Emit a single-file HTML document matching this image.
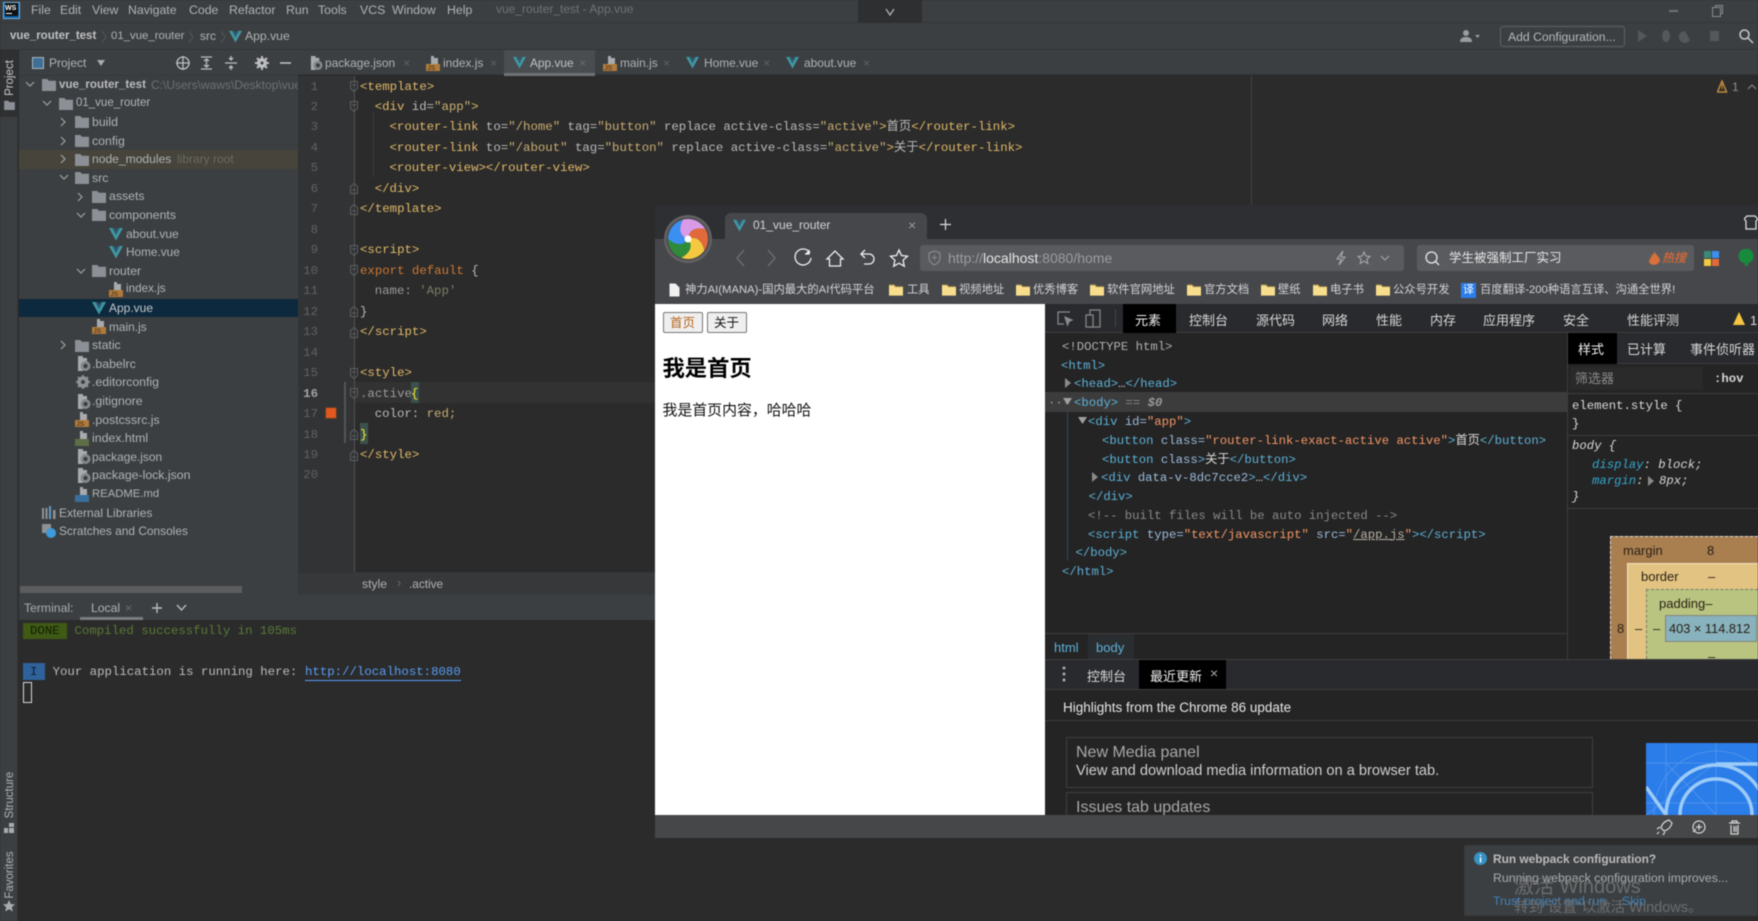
<!DOCTYPE html>
<html lang="zh"><head><meta charset="utf-8"><title>vue_router_test - App.vue</title>
<style>
*{box-sizing:border-box}
html,body{margin:0;padding:0;width:1758px;height:921px;overflow:hidden;background:#2b2b2b}
body{position:relative;font-family:"Liberation Sans","Noto Sans CJK SC",sans-serif;font-size:12.300px;color:#b0b3b5;filter:blur(.4px)}
.b,.t,svg.i{position:absolute}
.t{white-space:pre;line-height:20px;height:20px}
.m{font-family:"Liberation Mono","Noto Sans CJK SC",monospace;font-size:12.37px;margin-top:.5px}
.d{font-family:"Liberation Mono","Noto Sans CJK SC",monospace;font-size:12.28px;color:#5db0d7}
.c{font-family:"Liberation Sans","Noto Sans CJK SC",sans-serif;font-size:13px;color:#d8d8d8;margin-top:1.500px}
.bm{font-size:11.300px;color:#d4d4d6}
.tb{font-size:11.900px;top:53px}
.ln{font-family:"Liberation Mono",monospace;font-size:12.37px;color:#606366;width:24px;text-align:right;left:294px;margin-top:.5px}
.g{color:#e0b868}.a{color:#bababa}.v{color:#c8ad72}.o{color:#cc7832}.w{color:#bababa}.s{color:#7b7f67}.q{color:#9b9b9b}
.ka{color:#9bbbdc}.va{color:#f29766}.wh{color:#d9d9d9}.cm{color:#898989}
.lab{color:#2a2116;font-size:13px}
</style></head><body>
<svg width="0" height="0" style="position:absolute">
<defs>
<symbol id="vue" viewBox="0 0 14 14"><path d="M0 1h3.4L7 8 10.600 1H14L7 13.500z" fill="#3f97a5"/><path d="M3.600 1h2L7 4 8.400 1h2L7 7.600z" fill="#2f5f72"/></symbol>
<symbol id="fo" viewBox="0 0 14 13"><path d="M0 1h5.500l1.200 1.800H14V13H0z" fill="#8b9096"/></symbol>
<symbol id="js" viewBox="0 0 14 15"><path d="M5 0h3v2h4v7H5z" fill="#a7abae"/><rect y="8" width="14" height="7" fill="#b07a3c"/><text x="1.400" y="14.200" font-family="Liberation Sans" font-size="6.600" fill="#3a2a14">JS</text></symbol>
<symbol id="cf" viewBox="0 0 14 15"><path d="M1 0h5v2h4v5l-4 8H1z" fill="#a7abae"/><circle cx="8.500" cy="10" r="5" fill="#85898d"/><circle cx="8.500" cy="10" r="2.200" fill="#3c3f41"/></symbol>
<symbol id="ht" viewBox="0 0 14 15"><path d="M5 0h3v2h4v7H5z" fill="#a7abae"/><rect y="8" width="14" height="7" fill="#5e6e46"/></symbol>
<symbol id="md" viewBox="0 0 14 15"><path d="M5 0h3v2h4v7H5z" fill="#a7abae"/><rect y="8" width="14" height="7" fill="#3a6f9d"/></symbol>
<symbol id="fold" viewBox="0 0 8 11"><path d="M.5.5h7v7L4 10.500.5 7.500zM2 4h4" fill="none" stroke="#5c5f61"/></symbol>
<symbol id="fend" viewBox="0 0 8 11"><path d="M.5 10.500h7v-7L4 .5.5 3.500zM2 7h4" fill="none" stroke="#5c5f61"/></symbol>
<symbol id="fd" viewBox="0 0 16 14"><path d="M0 2h6l1.400 2H16v10H0z" fill="#f7dd8c"/><path d="M0 1.500h6l1.400 2H16" fill="none" stroke="#8c7a42"/></symbol>
</defs></svg>

<!-- title bar -->
<div class="b" style="left:0;top:0;width:1758px;height:23px;background:#3c3f41;border-bottom:1px solid #353739"></div>
<div class="b" style="left:3px;top:2px;width:17px;height:17px;background:#0b5fa5;border:1px solid #6fb0e0"></div>
<div class="b" style="left:5px;top:3px;width:13px;height:13px;background:#111"></div>
<span class="t" style="left:5px;top:-1px;font-size:7px;font-weight:bold;color:#fff">WS</span>
<div class="b" style="left:6px;top:13px;width:6px;height:1px;background:#fff"></div>
<span class="t" style="left:31px;top:0">File</span><span class="t" style="left:60px;top:0">Edit</span><span class="t" style="left:92px;top:0">View</span><span class="t" style="left:128px;top:0">Navigate</span><span class="t" style="left:189px;top:0">Code</span><span class="t" style="left:229px;top:0">Refactor</span><span class="t" style="left:286px;top:0">Run</span><span class="t" style="left:318px;top:0">Tools</span><span class="t" style="left:360px;top:0">VCS</span><span class="t" style="left:392px;top:0">Window</span><span class="t" style="left:447px;top:0">Help</span>
<span class="t" style="left:496px;top:-1px;font-size:12px;color:#6f7376">vue_router_test - App.vue</span>
<div class="b" style="left:858px;top:0;width:64px;height:23px;background:#2d2f31"></div>
<svg class="i" style="left:884px;top:7px" width="12" height="10"><path d="M2 2l4 6 4-6" fill="none" stroke="#b5b5b5" stroke-width="1.200"/></svg>
<div class="b" style="left:1669px;top:10px;width:9px;height:1.500px;background:#6f7275"></div>
<svg class="i" style="left:1712px;top:5px" width="11" height="12" fill="none" stroke="#8a8c8f"><path d="M3.500 2.500v-2h7v8h-2"/><rect x=".5" y="2.500" width="8" height="9"/></svg>

<!-- nav bar -->
<div class="b" style="left:0;top:23px;width:1758px;height:27px;background:#3c3f41;border-bottom:1px solid #323436"></div>
<span class="t" style="left:10px;top:26px;font-weight:bold;font-size:11.500px;color:#bfc1c3">vue_router_test</span>
<svg class="i" style="left:100px;top:29px" width="130" height="16" fill="none" stroke="#54575a"><path d="M2 2l4 6-4 6M89 2l4 6-4 6M121 2l4 6-4 6"/></svg>
<span class="t" style="left:111px;top:26px;font-size:11.400px">01_vue_router</span>
<span class="t" style="left:200px;top:26px;font-size:12px">src</span>
<svg class="i" style="left:229px;top:30px" width="13" height="13"><use href="#vue"/></svg>
<span class="t" style="left:245px;top:26px;font-size:12.200px">App.vue</span>
<svg class="i" style="left:1459px;top:28px" width="22" height="16"><circle cx="7" cy="5" r="3" fill="#9a9c9e"/><path d="M1 14c0-4 3-5 6-5s6 1 6 5z" fill="#9a9c9e"/><path d="M16 7h5l-2.500 3z" fill="#9a9c9e"/></svg>
<div class="b" style="left:1500px;top:26px;width:125px;height:21px;border:1px solid #5f6265;border-radius:3px"></div>
<span class="t" style="left:1508px;top:27px;font-size:12.200px;color:#b5b7b9">Add Configuration...</span>
<svg class="i" style="left:1636px;top:28px" width="90" height="16" fill="#55585a"><path d="M2 2l9 6-9 6z"/><ellipse cx="30" cy="8" rx="4" ry="6"/><path d="M49 3a6 6 0 1 0 5 9z"/><rect x="74" y="3" width="9" height="10"/></svg>
<svg class="i" style="left:1738px;top:28px" width="16" height="16" fill="none" stroke="#c6c8ca" stroke-width="1.500"><circle cx="6.500" cy="6.500" r="4.500"/><path d="M10 10l5 5"/></svg>

<!-- left strip -->
<div class="b" style="left:0;top:50px;width:18px;height:871px;background:#3c3f41;border-right:1px solid #323436"></div>
<div class="b" style="left:0;top:50px;width:18px;height:67px;background:#2e3032"></div>
<span class="t" style="left:-8px;top:68px;width:36px;font-size:11.500px;color:#c9cbcd;transform:rotate(-90deg);text-align:center">Project</span>
<svg class="i" style="left:4px;top:100px" width="11" height="10"><use href="#fo"/></svg>
<span class="t" style="left:-14px;top:785px;width:48px;font-size:11.500px;transform:rotate(-90deg);text-align:center">Structure</span>
<svg class="i" style="left:4px;top:823px" width="10" height="10" fill="#a9acaf"><rect x="0" y="5" width="4" height="5"/><rect x="5" y="0" width="5" height="4"/><rect x="5" y="5" width="5" height="5"/></svg>
<span class="t" style="left:-14px;top:865px;width:48px;font-size:11.500px;transform:rotate(-90deg);text-align:center">Favorites</span>
<svg class="i" style="left:3px;top:900px" width="12" height="12"><path d="M6 0l1.800 4 4.200.4-3.200 2.800 1 4.300L6 9.200 2.200 11.500l1-4.300L0 4.400 4.200 4z" fill="#a9acaf"/></svg>

<!-- project panel -->
<div class="b" style="left:19px;top:50px;width:279px;height:545px;background:#3c3f41"></div>
<div class="b" style="left:19px;top:75px;width:279px;height:1px;background:#36383a"></div>
<div class="b" style="left:32px;top:57px;width:12px;height:12px;background:#3f6f96;border:1px solid #a9b5bd"></div>
<span class="t" style="left:49px;top:53px;font-size:12px">Project</span>
<svg class="i" style="left:97px;top:60px" width="9" height="6"><path d="M0 0h8L4 6z" fill="#a9acaf"/></svg>
<svg class="i" style="left:175px;top:55px" width="120" height="16" fill="none" stroke="#bcbec0" stroke-width="1.300"><circle cx="8" cy="8" r="6"/><path d="M8 1v14M1 8h14"/><path d="M26 2h11M26 14h11M31.500 4v8M29 6l2.500-2 2.500 2M29 10l2.500 2 2.500-2"/><path d="M50 8h12M56 1v4M54 3l2 2 2-2M56 15v-4M54 13l2-2 2 2"/><circle cx="87" cy="8" r="3.500" stroke-width="3"/><path d="M87 1v14M80 8h14M82 3l10 10M92 3L82 13" stroke-width="2"/><circle cx="87" cy="8" r="1.500" fill="#3c3f41" stroke="none"/><path d="M105 8h11" stroke-width="1.600"/></svg>
<div class="b" style="left:19px;top:150px;width:279px;height:18.500px;background:#46443b"></div>
<div class="b" style="left:19px;top:298.500px;width:279px;height:18.500px;background:#0d293e"></div>

<!-- chevrons -->
<svg class="i" style="left:0;top:0" width="300" height="600" fill="none" stroke="#a0a3a6" stroke-width="1.200">
<path d="M26 82l4 4 4-4M43 101l4 4 4-4M60 175l4 4 4-4M77 213l4 4 4-4M77 269l4 4 4-4"/>
<path d="M61 118l4 4-4 4M61 137l4 4-4 4M61 155l4 4-4 4M78 193l4 4-4 4M61 341l4 4-4 4"/>
</svg>

<svg class="i" style="left:42px;top:78px" width="14" height="13"><use href="#fo"/></svg><span class="t" style="left:59px;top:74.700px;font-weight:bold;color:#b9bbbd;font-size:11.600px">vue_router_test</span><span class="t" style="left:151px;top:74.700px;width:147px;overflow:hidden;color:#6d7174;font-size:12px">C:\Users\waws\Desktop\vue_router_test</span>
<svg class="i" style="left:59px;top:97px" width="14" height="13"><use href="#fo"/></svg><span class="t" style="left:76px;top:93.300px;font-size:11.500px">01_vue_router</span>
<svg class="i" style="left:75px;top:115px" width="14" height="13"><use href="#fo"/></svg><span class="t" style="left:92px;top:111.900px">build</span>
<svg class="i" style="left:75px;top:134px" width="14" height="13"><use href="#fo"/></svg><span class="t" style="left:92px;top:130.500px">config</span>
<svg class="i" style="left:75px;top:153px" width="14" height="13"><use href="#fo"/></svg><span class="t" style="left:92px;top:149.100px;font-size:12.100px">node_modules</span><span class="t" style="left:177px;top:149.100px;color:#696b63;font-size:12px">library root</span>
<svg class="i" style="left:75px;top:171px" width="14" height="13"><use href="#fo"/></svg><span class="t" style="left:92px;top:167.700px">src</span>
<svg class="i" style="left:92px;top:190px" width="14" height="13"><use href="#fo"/></svg><span class="t" style="left:109px;top:186.300px">assets</span>
<svg class="i" style="left:92px;top:208px" width="14" height="13"><use href="#fo"/></svg><span class="t" style="left:109px;top:204.900px">components</span>
<svg class="i" style="left:109px;top:227px" width="14" height="14"><use href="#vue"/></svg><span class="t" style="left:126px;top:223.500px;font-size:12px">about.vue</span>
<svg class="i" style="left:109px;top:245px" width="14" height="14"><use href="#vue"/></svg><span class="t" style="left:126px;top:242.100px;font-size:11.800px">Home.vue</span>
<svg class="i" style="left:92px;top:264px" width="14" height="13"><use href="#fo"/></svg><span class="t" style="left:109px;top:260.700px">router</span>
<svg class="i" style="left:109px;top:282px" width="14" height="15"><use href="#js"/></svg><span class="t" style="left:126px;top:279.300px;font-size:11.700px">index.js</span>
<svg class="i" style="left:92px;top:301px" width="14" height="14"><use href="#vue"/></svg><span class="t" style="left:109px;top:297.900px;color:#c4c7c9;font-size:12px">App.vue</span>
<svg class="i" style="left:92px;top:319px" width="14" height="15"><use href="#js"/></svg><span class="t" style="left:109px;top:316.500px;font-size:11.900px">main.js</span>
<svg class="i" style="left:75px;top:339px" width="14" height="13"><use href="#fo"/></svg><span class="t" style="left:92px;top:335.100px">static</span>
<svg class="i" style="left:77px;top:356px" width="14" height="15"><use href="#cf"/></svg><span class="t" style="left:92px;top:353.700px">.babelrc</span>
<svg class="i" style="left:76px;top:375px" width="14" height="14"><circle cx="7" cy="7" r="4" fill="none" stroke="#8f9295" stroke-width="3.500"/><path d="M7 0v14M0 7h14M2 2l10 10M12 2L2 12" stroke="#8f9295" stroke-width="1.800"/><circle cx="7" cy="7" r="2" fill="#3c3f41"/></svg><span class="t" style="left:92px;top:372.300px">.editorconfig</span>
<svg class="i" style="left:77px;top:394px" width="14" height="15"><use href="#cf"/></svg><span class="t" style="left:92px;top:390.900px">.gitignore</span>
<svg class="i" style="left:75px;top:412px" width="14" height="15"><use href="#js"/></svg><span class="t" style="left:92px;top:409.500px">.postcssrc.js</span>
<svg class="i" style="left:75px;top:431px" width="14" height="15"><use href="#ht"/></svg><span class="t" style="left:92px;top:428.100px">index.html</span>
<svg class="i" style="left:77px;top:449px" width="14" height="15"><use href="#cf"/></svg><span class="t" style="left:92px;top:446.700px;font-size:11.900px">package.json</span>
<svg class="i" style="left:77px;top:468px" width="14" height="15"><use href="#cf"/></svg><span class="t" style="left:92px;top:465.300px">package-lock.json</span>
<svg class="i" style="left:75px;top:487px" width="14" height="15"><use href="#md"/></svg><span class="t" style="left:92px;top:483.900px;font-size:11.300px">README.md</span>
<svg class="i" style="left:42px;top:506px" width="14" height="13" fill="#8f9295"><rect x="0" y="2" width="2" height="11"/><rect x="3.500" y="2" width="2" height="11"/><rect x="7" y="0" width="2" height="13" fill="#5d9ccb"/><rect x="11" y="4" width="2.500" height="9"/></svg><span class="t" style="left:59px;top:502.500px;font-size:12px">External Libraries</span>
<svg class="i" style="left:42px;top:524px" width="15" height="15"><rect x="0" y="0" width="9" height="9" fill="#8f9295"/><circle cx="9" cy="9" r="5" fill="#3d9adb"/></svg><span class="t" style="left:59px;top:521.100px;font-size:11.900px">Scratches and Consoles</span>
<div class="b" style="left:20px;top:586px;width:222px;height:7px;background:#5b5d5f"></div>

<!-- editor tabs -->
<div class="b" style="left:298px;top:50px;width:1460px;height:25px;background:#3c3f41;border-bottom:1px solid #323436"></div>
<div class="b" style="left:504px;top:50px;width:91px;height:26px;background:#4a4d4f;border-bottom:3px solid #6e7274"></div>
<svg class="i" style="left:310px;top:56px" width="13" height="14"><use href="#cf"/></svg><span class="t tb" style="left:325px">package.json</span><span class="t" style="left:403px;top:53px;color:#5f6264">×</span>
<svg class="i" style="left:426px;top:56px" width="14" height="15"><use href="#js"/></svg><span class="t tb" style="left:443px">index.js</span><span class="t" style="left:490px;top:53px;color:#5f6264">×</span>
<svg class="i" style="left:513px;top:56px" width="13" height="13"><use href="#vue"/></svg><span class="t tb" style="left:530px;color:#c0c2c4">App.vue</span><span class="t" style="left:579px;top:53px;color:#6a6d70">×</span>
<svg class="i" style="left:603px;top:56px" width="14" height="15"><use href="#js"/></svg><span class="t tb" style="left:620px">main.js</span><span class="t" style="left:663px;top:53px;color:#5f6264">×</span>
<svg class="i" style="left:686px;top:56px" width="13" height="13"><use href="#vue"/></svg><span class="t tb" style="left:704px">Home.vue</span><span class="t" style="left:763px;top:53px;color:#5f6264">×</span>
<svg class="i" style="left:786px;top:56px" width="13" height="13"><use href="#vue"/></svg><span class="t tb" style="left:804px">about.vue</span><span class="t" style="left:863px;top:53px;color:#5f6264">×</span>

<!-- editor -->
<div class="b" style="left:298px;top:76px;width:56px;height:496px;background:#313335"></div>
<div class="b" style="left:354px;top:76px;width:1px;height:496px;background:#505254"></div>
<div class="b" style="left:1251px;top:76px;width:1px;height:130px;background:#3f4143"></div>
<div class="b" style="left:355px;top:382px;width:300px;height:20.500px;background:#323232"></div>
<div class="b" style="left:344px;top:382px;width:1.500px;height:61px;background:#555"></div>
<div class="b" style="left:373px;top:112px;width:1px;height:65px;background:#3b3d3f"></div>
<div class="b" style="left:326px;top:408px;width:10px;height:10px;background:#e05a1f;box-shadow:0 0 0 1px #5d3a27"></div>

<span class="t ln" style="top:76px">1</span><span class="t ln" style="top:96.500px">2</span><span class="t ln" style="top:116.900px">3</span><span class="t ln" style="top:137.400px">4</span><span class="t ln" style="top:157.900px">5</span><span class="t ln" style="top:178.400px">6</span><span class="t ln" style="top:198.800px">7</span><span class="t ln" style="top:219.300px">8</span><span class="t ln" style="top:239.800px">9</span><span class="t ln" style="top:260.200px">10</span><span class="t ln" style="top:280.700px">11</span><span class="t ln" style="top:301.200px">12</span><span class="t ln" style="top:321.600px">13</span><span class="t ln" style="top:342.100px">14</span><span class="t ln" style="top:362.600px">15</span><span class="t ln" style="top:383px;color:#a4a3a3;font-weight:bold">16</span><span class="t ln" style="top:403.500px">17</span><span class="t ln" style="top:424px">18</span><span class="t ln" style="top:444.400px">19</span><span class="t ln" style="top:464.900px">20</span>

<svg class="i" style="left:350px;top:81px" width="8" height="11"><use href="#fold"/></svg>
<svg class="i" style="left:350px;top:101px" width="8" height="11"><use href="#fold"/></svg>
<svg class="i" style="left:350px;top:183px" width="8" height="11"><use href="#fend"/></svg>
<svg class="i" style="left:350px;top:204px" width="8" height="11"><use href="#fend"/></svg>
<svg class="i" style="left:350px;top:245px" width="8" height="11"><use href="#fold"/></svg>
<svg class="i" style="left:350px;top:265px" width="8" height="11"><use href="#fold"/></svg>
<svg class="i" style="left:350px;top:306px" width="8" height="11"><use href="#fend"/></svg>
<svg class="i" style="left:350px;top:327px" width="8" height="11"><use href="#fend"/></svg>
<svg class="i" style="left:350px;top:368px" width="8" height="11"><use href="#fold"/></svg>
<svg class="i" style="left:350px;top:388px" width="8" height="11"><use href="#fold"/></svg>
<svg class="i" style="left:350px;top:429px" width="8" height="11"><use href="#fend"/></svg>
<svg class="i" style="left:350px;top:450px" width="8" height="11"><use href="#fend"/></svg>

<span class="t m g" style="left:360px;top:76px">&lt;template&gt;</span>
<span class="t m g" style="left:374.700px;top:96.500px">&lt;div <span class="a">id=</span><span class="v">"app"</span>&gt;</span>
<span class="t m g" style="left:389.500px;top:116.900px">&lt;router-link <span class="a">to=</span><span class="v">"/home"</span> <span class="a">tag=</span><span class="v">"button"</span> <span class="a">replace</span> <span class="a">active-class=</span><span class="v">"active"</span>&gt;<span class="w">首页</span>&lt;/router-link&gt;</span>
<span class="t m g" style="left:389.500px;top:137.400px">&lt;router-link <span class="a">to=</span><span class="v">"/about"</span> <span class="a">tag=</span><span class="v">"button"</span> <span class="a">replace</span> <span class="a">active-class=</span><span class="v">"active"</span>&gt;<span class="w">关于</span>&lt;/router-link&gt;</span>
<span class="t m g" style="left:389.500px;top:157.900px">&lt;router-view&gt;&lt;/router-view&gt;</span>
<span class="t m g" style="left:374.700px;top:178.400px">&lt;/div&gt;</span>
<span class="t m g" style="left:360px;top:198.800px">&lt;/template&gt;</span>
<span class="t m g" style="left:360px;top:239.800px">&lt;script&gt;</span>
<span class="t m o" style="left:360px;top:260.200px">export default <span class="w">{</span></span>
<span class="t m q" style="left:374.700px;top:280.700px">name: <span class="s">'App'</span></span>
<span class="t m w" style="left:360px;top:301.200px">}</span>
<span class="t m g" style="left:360px;top:321.600px">&lt;/script&gt;</span>
<span class="t m g" style="left:360px;top:362.600px">&lt;style&gt;</span>
<span class="t m q" style="left:360px;top:383px">.active</span>
<div class="b" style="left:411px;top:382px;width:7.500px;height:20.500px;background:#3b514d"></div>
<span class="t m" style="left:411px;top:383px;color:#ffef28">{</span>
<span class="t m w" style="left:374.700px;top:403.500px">color: <span class="v">red;</span></span>
<div class="b" style="left:360px;top:423px;width:7.500px;height:20.500px;background:#3b514d"></div>
<span class="t m" style="left:360px;top:424px;color:#ffef28">}</span>
<span class="t m g" style="left:360px;top:444.400px">&lt;/style&gt;</span>

<svg class="i" style="left:1717px;top:80px" width="14" height="13"><path d="M5 1L.5 12h9z" fill="none" stroke="#c08a3e" stroke-width="1.500"/><path d="M5 4v5" stroke="#c08a3e"/></svg>
<span class="t" style="left:1732px;top:77px;font-size:12px;color:#8d8f91">1</span>
<svg class="i" style="left:1747px;top:84px" width="10" height="6"><path d="M1 5l4-4 4 4" fill="none" stroke="#8d8f91"/></svg>

<!-- editor breadcrumb -->
<div class="b" style="left:298px;top:572px;width:360px;height:23px;background:#36383a;border-top:1px solid #323436"></div>
<span class="t" style="left:362px;top:574px;font-size:12.200px">style</span>
<span class="t" style="left:397px;top:573px;font-size:12.500px;color:#6a6d70">›</span>
<span class="t" style="left:409px;top:574px;font-size:11.800px">.active</span>

<!-- terminal -->
<div class="b" style="left:19px;top:595px;width:640px;height:25px;background:#3c3f41"></div>
<span class="t" style="left:24px;top:597.500px;font-size:12.200px;color:#a9acaf">Terminal:</span>
<span class="t" style="left:91px;top:597.500px;font-size:12.200px">Local</span>
<span class="t" style="left:125px;top:597.500px;color:#6a6d70">×</span>
<div class="b" style="left:80px;top:617px;width:63px;height:3px;background:#7a7d80"></div>
<svg class="i" style="left:151px;top:602px" width="40" height="12" fill="none" stroke="#b8babc" stroke-width="1.400"><path d="M6 1v10M1 6h10"/><path d="M26 3l4.500 5 4.500-5"/></svg>

<div class="b" style="left:23px;top:622.500px;width:44px;height:16px;background:#3f5a14"></div>
<span class="t m" style="left:30px;top:620.500px;color:#111a04">DONE</span>
<span class="t m" style="left:74.500px;top:620.500px;color:#5a7a35">Compiled successfully in 105ms</span>
<div class="b" style="left:23px;top:663px;width:22px;height:17px;background:#2f619a"></div>
<span class="t m" style="left:30px;top:661.500px;color:#0e1f33">I</span>
<span class="t m" style="left:52.600px;top:661.500px;color:#bbb">Your application is running here: </span>
<span class="t m" style="left:305px;top:661.500px;color:#589df6;border-bottom:1px solid #589df6;height:19px">http://localhost:8080</span>
<div class="b" style="left:23px;top:682px;width:8.500px;height:21px;border:1.500px solid #d8d8d8"></div>

<!-- browser -->
<div class="b" style="left:655px;top:205px;width:1103px;height:34px;background:#2e2f32"></div>
<div class="b" style="left:655px;top:239px;width:1103px;height:65px;background:#46474b"></div>
<div class="b" style="left:725px;top:213px;width:202px;height:27px;background:#46474b;border-radius:6px 6px 0 0"></div>
<svg class="i" style="left:664px;top:215px" width="48" height="48" viewBox="0 0 48 48">
<circle cx="24" cy="24" r="24" fill="#626264"/>
<circle cx="24" cy="24" r="21.500" fill="#4a4a4c"/>
<path d="M24 24Q16.500 34.600 4 24A20 20 0 0 1 18.800 4.700Q11.800 19.600 24 24z" fill="#3b8ff0"/>
<path d="M24 24Q11.800 19.600 18.800 4.700A20 20 0 0 1 41.300 14Q25.100 11 24 24z" fill="#d99be8"/>
<path d="M24 24Q25.100 11 41.300 14A20 20 0 0 1 40.400 35.500Q36.200 19.600 24 24z" fill="#e2693a"/>
<path d="M24 24Q36.200 19.600 40.400 35.500A20 20 0 0 1 17.200 42.800Q31.500 34.600 24 24z" fill="#f4c93f"/>
<path d="M24 24Q31.500 34.600 17.200 42.800A20 20 0 0 1 4 24Q16.500 34.600 24 24z" fill="#2e8b3a"/>
<circle cx="24" cy="24" r="3.500" fill="#fff"/>
</svg>
<svg class="i" style="left:733px;top:219px" width="13" height="13"><use href="#vue"/></svg>
<span class="t" style="left:753px;top:215px;font-size:12px;color:#d4d4d6">01_vue_router</span>
<span class="t" style="left:908px;top:215px;font-size:14px;color:#999">×</span>
<svg class="i" style="left:940px;top:219px" width="11" height="11"><path d="M5.500 0v11M0 5.500h11" stroke="#ddd" stroke-width="1.200"/></svg>
<svg class="i" style="left:1744px;top:215px" width="14" height="15"><path d="M3 1h8l3 3-2 2v8H2V6L0 4z" fill="none" stroke="#ddd" stroke-width="1.300"/></svg>

<svg class="i" style="left:730px;top:244px" width="190" height="28" fill="none" stroke="#eee" stroke-width="1.300">
<path d="M14 6l-7 8 7 8M38 6l7 8-7 8" stroke="#707175"/>
<path d="M80 9a8 8 0 1 0 1 5"/><path d="M79 6v4h-4" fill="#eee"/>
<path d="M97 15l8-8 8 8h-2.500v7h-11v-7z"/>
<path d="M131 10h8a4.500 4.500 0 0 1 0 10h-5M135 6l-4 4 4 4"/>
<path d="M169 6l2.500 5.500 6 .7-4.400 4 1.200 6-5.300-3-5.300 3 1.200-6-4.400-4 6-.7z"/>
</svg>
<div class="b" style="left:920px;top:245px;width:484px;height:26px;background:#5a5b5f;border-radius:3px"></div>
<svg class="i" style="left:928px;top:250px" width="13" height="16"><path d="M6.500 1L12 3v5c0 3-2.500 5.500-5.500 7C3.500 13.500 1 11 1 8V3z" fill="none" stroke="#88898c" stroke-width="1.200"/><path d="M6.500 5v5M4 7.500h5" stroke="#88898c"/></svg>
<span class="t" style="left:948px;top:248px;font-size:14px;color:#9b9c9f">http://<span style="color:#e6e6e6">localhost</span>:8080/home</span>
<svg class="i" style="left:1334px;top:250px" width="60" height="16" fill="none" stroke="#a6a7aa" stroke-width="1.100"><path d="M9 1L3 9h4l-2 6 6-8H7z"/><path d="M30 2l1.800 4 4.200.4-3.200 2.800 1 4.300-3.800-2.300-3.800 2.300 1-4.300-3.200-2.800 4.200-.4z"/><path d="M47 6l4 4 4-4"/></svg>
<div class="b" style="left:1417px;top:245px;width:277px;height:26px;background:#5a5b5f;border-radius:3px"></div>
<svg class="i" style="left:1425px;top:251px" width="15" height="15" fill="none" stroke="#e6e6e6" stroke-width="1.300"><circle cx="6.500" cy="6.500" r="5.500"/><path d="M10.500 10.500l3.500 3.500"/></svg>
<span class="t" style="left:1449px;top:248px;font-size:12.500px;color:#e6e6e6">学生被强制工厂实习</span>
<span class="t" style="left:1662px;top:248px;font-size:12px;font-weight:bold;font-style:italic;color:#c8683a">热搜</span>
<svg class="i" style="left:1648px;top:251px" width="14" height="15"><path d="M6 0c1 3 5 5 6 9a6 6 0 0 1-11 2C1 8 4 6 4 3c1 1 2 2 2-3z" fill="#d9713b"/></svg>
<svg class="i" style="left:1704px;top:251px" width="15" height="15"><rect width="7" height="7" fill="#3a8a7a"/><rect x="8" width="7" height="7" fill="#3b8ff0"/><rect y="8" width="7" height="7" fill="#f4c93f"/><rect x="8" y="8" width="7" height="7" fill="#e2693a"/></svg>
<svg class="i" style="left:1737px;top:249px" width="18" height="17"><circle cx="9" cy="7" r="7.500" fill="#178a3c"/><rect x="8" y="11" width="3" height="6" fill="#178a3c"/></svg>

<svg class="i" style="left:669px;top:283px" width="11" height="14"><path d="M.5.500h6l4 4v9H.5z" fill="#f0f0f0"/></svg>
<span class="t bm" style="left:685px;top:280px">神力AI(MANA)-国内最大的AI代码平台</span>
<svg class="i" style="left:889px;top:283px" width="14" height="13"><use href="#fd"/></svg><span class="t bm" style="left:907px;top:280px">工具</span>
<svg class="i" style="left:942px;top:283px" width="14" height="13"><use href="#fd"/></svg><span class="t bm" style="left:959px;top:280px">视频地址</span>
<svg class="i" style="left:1016px;top:283px" width="14" height="13"><use href="#fd"/></svg><span class="t bm" style="left:1033px;top:280px">优秀博客</span>
<svg class="i" style="left:1090px;top:283px" width="14" height="13"><use href="#fd"/></svg><span class="t bm" style="left:1107px;top:280px">软件官网地址</span>
<svg class="i" style="left:1187px;top:283px" width="14" height="13"><use href="#fd"/></svg><span class="t bm" style="left:1204px;top:280px">官方文档</span>
<svg class="i" style="left:1261px;top:283px" width="14" height="13"><use href="#fd"/></svg><span class="t bm" style="left:1278px;top:280px">壁纸</span>
<svg class="i" style="left:1313px;top:283px" width="14" height="13"><use href="#fd"/></svg><span class="t bm" style="left:1330px;top:280px">电子书</span>
<svg class="i" style="left:1376px;top:283px" width="14" height="13"><use href="#fd"/></svg><span class="t bm" style="left:1393px;top:280px">公众号开发</span>
<div class="b" style="left:1461px;top:283px;width:15px;height:15px;background:#2b7de9"></div>
<span class="t" style="left:1463px;top:280px;font-size:11px;color:#fff">译</span>
<span class="t bm" style="left:1480px;top:280px">百度翻译-200种语言互译、沟通全世界!</span>

<!-- page -->
<div class="b" style="left:655px;top:304px;width:390px;height:511px;background:#fff"></div>
<div class="b" style="left:663px;top:312px;width:40px;height:21px;background:#efefef;border:1px solid #767676;border-radius:2px"></div>
<span class="t" style="left:670px;top:313px;font-size:12.500px;color:#b5651d">首页</span>
<div class="b" style="left:707px;top:312px;width:40px;height:21px;background:#efefef;border:1px solid #767676;border-radius:2px"></div>
<span class="t" style="left:714px;top:313px;font-size:12.500px;color:#111">关于</span>
<span class="t" style="left:662.500px;top:358.500px;font-size:22.300px;font-weight:bold;color:#000">我是首页</span>
<span class="t" style="left:662.500px;top:400.500px;font-size:14.900px;color:#111">我是首页内容，哈哈哈</span>

<!-- devtools -->
<div class="b" style="left:1045px;top:304px;width:713px;height:511px;background:#242424"></div>
<div class="b" style="left:1045px;top:304px;width:713px;height:29px;background:#292a2d;border-bottom:1px solid #3d3d3d"></div>
<svg class="i" style="left:1056px;top:309px" width="50" height="20" fill="none" stroke="#8a8b8d" stroke-width="1.200"><path d="M14 3H2v12h6"/><path d="M9 8l7 3-3 1.500L11.500 16z" fill="#8a8b8d"/><rect x="34" y="1" width="10" height="17"/><rect x="30" y="6" width="7" height="12" fill="#292a2d"/></svg>
<div class="b" style="left:1115px;top:309px;width:1px;height:18px;background:#444"></div>
<div class="b" style="left:1123px;top:304px;width:53px;height:29px;background:#000"></div>
<span class="t c" style="left:1135px;top:309px;color:#f0f0f0">元素</span><span class="t c" style="left:1189px;top:309px">控制台</span><span class="t c" style="left:1256px;top:309px">源代码</span><span class="t c" style="left:1322px;top:309px">网络</span><span class="t c" style="left:1376px;top:309px">性能</span><span class="t c" style="left:1430px;top:309px">内存</span><span class="t c" style="left:1483px;top:309px">应用程序</span><span class="t c" style="left:1563px;top:309px">安全</span><span class="t c" style="left:1627px;top:309px">性能评测</span>
<svg class="i" style="left:1733px;top:312px" width="12" height="13"><path d="M6 0l6 13H0z" fill="#f4c542"/></svg>
<span class="t c" style="left:1750px;top:309px">1</span>

<div class="b" style="left:1045px;top:392px;width:522px;height:20px;background:#3c3c3c"></div>
<div class="b" style="left:1067px;top:412px;width:1px;height:148px;background:#2c4a66"></div>
<span class="t d" style="left:1062px;top:336.700px;color:#b0b0b0">&lt;!DOCTYPE html&gt;</span>
<span class="t d" style="left:1061px;top:355.500px">&lt;html&gt;</span>
<svg class="i" style="left:1065px;top:378px" width="7" height="10"><path d="M0 0l6 5-6 5z" fill="#8a8a8a"/></svg><span class="t d" style="left:1074px;top:374px">&lt;head&gt;<span class="wh">…</span>&lt;/head&gt;</span>
<span class="t d" style="left:1048px;top:392.500px;color:#9a9a9a">···</span>
<svg class="i" style="left:1063px;top:398px" width="10" height="8"><path d="M0 0h9L4.500 7z" fill="#a0a0a0"/></svg><span class="t d" style="left:1074px;top:393px">&lt;body&gt; <span style="color:#888;font-style:italic">== <span style="color:#999;font-weight:bold">$0</span></span></span>
<svg class="i" style="left:1078px;top:417px" width="10" height="8"><path d="M0 0h9L4.500 7z" fill="#a0a0a0"/></svg><span class="t d" style="left:1088px;top:412px">&lt;div <span class="ka">id=</span><span class="va">"app"</span>&gt;</span>
<span class="t d" style="left:1102px;top:430.500px">&lt;button <span class="ka">class=</span><span class="va">"router-link-exact-active active"</span>&gt;<span class="wh">首页</span>&lt;/button&gt;</span>
<span class="t d" style="left:1102px;top:449.500px">&lt;button <span class="ka">class</span>&gt;<span class="wh">关于</span>&lt;/button&gt;</span>
<svg class="i" style="left:1092px;top:472px" width="7" height="10"><path d="M0 0l6 5-6 5z" fill="#8a8a8a"/></svg><span class="t d" style="left:1101px;top:468px">&lt;div <span class="ka">data-v-8dc7cce2</span>&gt;<span class="wh">…</span>&lt;/div&gt;</span>
<span class="t d" style="left:1088.600px;top:486.500px">&lt;/div&gt;</span>
<span class="t d cm" style="left:1088px;top:505.500px">&lt;!-- built files will be auto injected --&gt;</span>
<span class="t d" style="left:1088px;top:524.500px">&lt;script <span class="ka">type=</span><span class="va">"text/javascript"</span> <span class="ka">src=</span><span class="va">"<u style="color:#b8b0a4">/app.js</u>"</span>&gt;&lt;/script&gt;</span>
<span class="t d" style="left:1075.500px;top:543px">&lt;/body&gt;</span>
<span class="t d" style="left:1062px;top:561.500px">&lt;/html&gt;</span>

<div class="b" style="left:1045px;top:633px;width:522px;height:1px;background:#3d3d3d"></div>
<div class="b" style="left:1088px;top:634px;width:46px;height:25px;background:#2a2d30"></div>
<span class="t" style="left:1054px;top:638px;font-size:13px;color:#5db0d7">html</span>
<span class="t" style="left:1096px;top:638px;font-size:13px;color:#5db0d7">body</span>

<!-- styles -->
<div class="b" style="left:1567px;top:333px;width:1px;height:326px;background:#3d3d3d"></div>
<div class="b" style="left:1568px;top:333px;width:190px;height:31px;background:#292a2d;border-bottom:1px solid #3d3d3d"></div>
<div class="b" style="left:1568px;top:333px;width:49px;height:31px;background:#000"></div>
<span class="t c" style="left:1578px;top:338.500px;color:#f0f0f0">样式</span><span class="t c" style="left:1627px;top:338.500px">已计算</span><span class="t c" style="left:1690px;top:338.500px;width:68px;overflow:hidden">事件侦听器</span>
<div class="b" style="left:1570px;top:367px;width:133px;height:23px;background:#2a2a2a"></div>
<span class="t" style="left:1575px;top:369px;font-size:13px;color:#8a8a8a">筛选器</span>
<span class="t d" style="left:1714px;top:369px;color:#d8d8d8;font-weight:bold">:hov</span>
<div class="b" style="left:1568px;top:393px;width:190px;height:1px;background:#3d3d3d"></div>
<span class="t d wh" style="left:1572px;top:395.500px">element.style {</span>
<span class="t d wh" style="left:1572px;top:414px">}</span>
<div class="b" style="left:1568px;top:435px;width:190px;height:1px;background:#3d3d3d"></div>
<span class="t d wh" style="left:1572px;top:436px;font-style:italic">body {</span>
<span class="t d" style="left:1592px;top:455px;font-style:italic;color:#35a6cc">display<span class="wh">: block;</span></span>
<span class="t d" style="left:1592px;top:471px;font-style:italic;color:#35a6cc">margin<span class="wh">:</span></span>
<svg class="i" style="left:1648px;top:476px" width="7" height="10"><path d="M0 0l6 5-6 5z" fill="#8a8a8a"/></svg>
<span class="t d wh" style="left:1659px;top:471px;font-style:italic">8px;</span>
<span class="t d wh" style="left:1572px;top:487px;font-style:italic">}</span>
<div class="b" style="left:1568px;top:508px;width:190px;height:1px;background:#3d3d3d"></div>

<div class="b" style="left:1610px;top:536px;width:148px;height:123px;background:#aa7f50;border:1px dashed #ddd;border-bottom:none;border-right:none"></div>
<div class="b" style="left:1627px;top:562.500px;width:131px;height:96.500px;background:#e3c381;border-top:1px solid #f2e5c4;border-left:1px solid #f2e5c4"></div>
<div class="b" style="left:1646px;top:589px;width:112px;height:70px;background:#b8c480;border:1px dashed #7a7a6a;border-bottom:none;border-right:none"></div>
<div class="b" style="left:1665px;top:615px;width:92px;height:27px;background:#88b2bd;border:1px solid #85857c"></div>
<span class="t lab" style="left:1623px;top:541px">margin</span><span class="t lab" style="left:1707px;top:541px">8</span>
<span class="t lab" style="left:1641px;top:567px">border</span><span class="t lab" style="left:1708px;top:567px">–</span>
<span class="t lab" style="left:1659px;top:594px">padding–</span>
<span class="t lab" style="left:1617px;top:619px">8</span><span class="t lab" style="left:1635px;top:619px">–</span><span class="t lab" style="left:1653px;top:619px">–</span>
<span class="t lab" style="left:1669px;top:619px;font-size:12.800px">403 × 114.812</span>
<span class="t lab" style="left:1708px;top:647px">–</span>

<!-- drawer -->
<div class="b" style="left:1045px;top:659px;width:713px;height:1px;background:#3d3d3d"></div>
<div class="b" style="left:1045px;top:660px;width:713px;height:30px;background:#292a2d;border-bottom:1px solid #3d3d3d"></div>
<svg class="i" style="left:1062px;top:666px" width="4" height="16" fill="#aaa"><circle cx="2" cy="2" r="1.500"/><circle cx="2" cy="8" r="1.500"/><circle cx="2" cy="14" r="1.500"/></svg>
<span class="t c" style="left:1087px;top:665px">控制台</span>
<div class="b" style="left:1139px;top:660px;width:87px;height:29px;background:#000"></div>
<span class="t c" style="left:1150px;top:665px;color:#f0f0f0">最近更新</span>
<span class="t" style="left:1210px;top:663px;font-size:14px;color:#aaa">×</span>
<span class="t" style="left:1063px;top:697.500px;color:#e6e6e6;font-size:13.500px">Highlights from the Chrome 86 update</span>
<div class="b" style="left:1045px;top:720px;width:713px;height:1px;background:#3d3d3d"></div>
<div class="b" style="left:1066px;top:737px;width:527px;height:51px;border:1px solid #3f3f3f"></div>
<span class="t" style="left:1076px;top:743px;font-size:16px;color:#a8a8a8">New Media panel</span>
<span class="t" style="left:1076px;top:761px;font-size:14.600px;color:#cfcfcf">View and download media information on a browser tab.</span>
<div class="b" style="left:1066px;top:792px;width:527px;height:24px;border:1px solid #3f3f3f;border-bottom:none"></div>
<span class="t" style="left:1076px;top:798px;font-size:16px;color:#a8a8a8">Issues tab updates</span>
<svg class="i" style="left:1646px;top:743px" width="112" height="72" viewBox="0 0 112 72">
<rect width="112" height="72" fill="#2b7de9"/>
<g stroke="#5a9bee" stroke-width="1" fill="none" opacity=".7"><path d="M0 20h112M0 60h112M70 0v72M20 0v72M20 20l50 52M0 72L70 20"/><circle cx="70" cy="70" r="62"/></g>
<g stroke="#9ccbf8" stroke-width="3.500" fill="none"><circle cx="70" cy="72" r="50"/><circle cx="70" cy="72" r="36"/><path d="M0 44l20 28"/><path d="M70 21h42"/></g>
</svg>

<!-- browser bottom bar -->
<div class="b" style="left:655px;top:815px;width:1103px;height:23px;background:#464749"></div>
<svg class="i" style="left:1655px;top:818px" width="90" height="18" fill="none" stroke="#d8d8d8" stroke-width="1.200"><path d="M14 2c-4 1-7 4-8 8l3 3c4-1 7-4 8-8zM5 9L2 11M10 14l-2 3M4 14l-2 2"/><circle cx="44" cy="9" r="6"/><path d="M44 6v6M41 9h6M38 14l3-3"/><path d="M74 5h11M77 5V3h5v2M76 7v9h7V7M79 8v6M81 8v6"/></svg>

<!-- notification -->
<div class="b" style="left:1464px;top:845px;width:294px;height:71px;background:#3c3f41;border:1px solid #37393b"></div>
<svg class="i" style="left:1474px;top:852px" width="13" height="13"><circle cx="6.500" cy="6.500" r="6.500" fill="#3592c4"/><rect x="5.800" y="5.500" width="1.500" height="5" fill="#fff"/><rect x="5.800" y="2.800" width="1.500" height="1.500" fill="#fff"/></svg>
<span class="t" style="left:1493px;top:849px;font-weight:bold;font-size:11.900px;color:#bbb">Run webpack configuration?</span>
<span class="t" style="left:1493px;top:868px;font-size:12.300px;color:#a9acaf">Running webpack configuration improves...</span>
<span class="t" style="left:1493px;top:891px;font-size:12.300px;color:#3f82bd">Trust project and run</span>
<span class="t" style="left:1622px;top:891px;font-size:12.300px;color:#3f82bd">Skip</span>
<span class="t" style="left:1514px;top:875px;font-size:20px;color:#6b6d6f;line-height:24px;height:24px">激活 Windows</span>
<span class="t" style="left:1514px;top:898px;font-size:14.500px;color:#6b6d6f">转到“设置”以激活 Windows。</span>
</body></html>
